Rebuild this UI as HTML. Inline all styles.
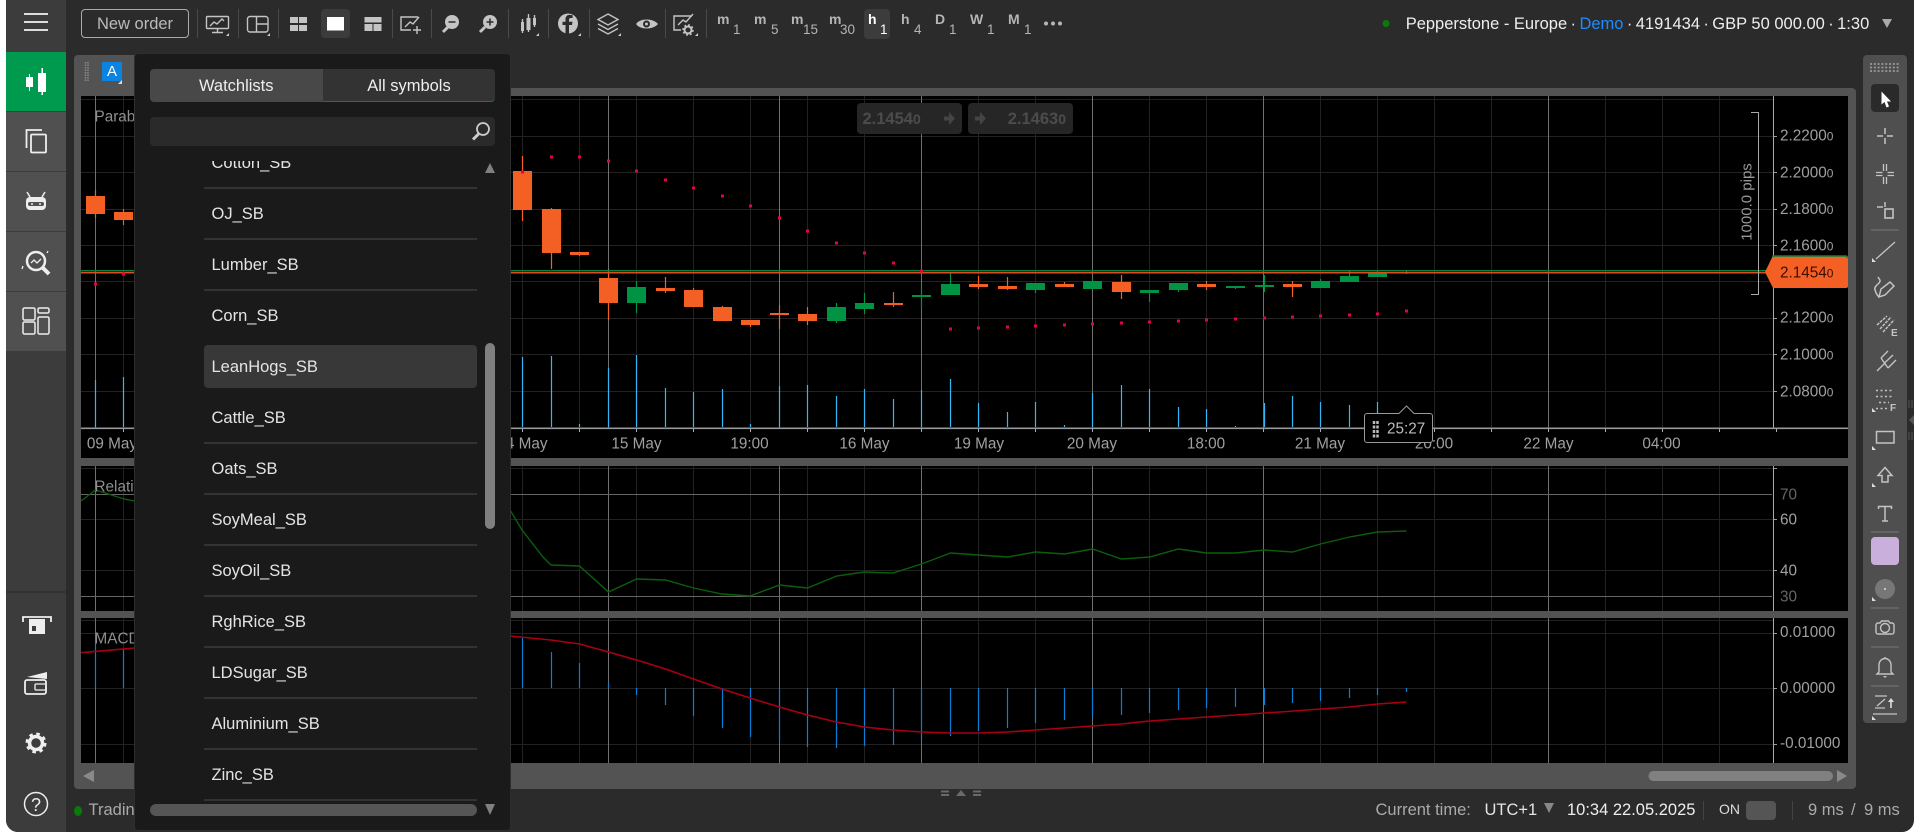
<!DOCTYPE html>
<html lang="en"><head><meta charset="utf-8"><title>Chart</title>
<style>
html,body{margin:0;padding:0;background:#fff;width:1920px;height:837px;overflow:hidden}
body{font-family:"Liberation Sans",sans-serif;position:relative}
div{position:absolute;box-sizing:border-box}
.t{white-space:nowrap;line-height:20px;height:20px;font-size:16.5px;color:#aaa}
svg{position:absolute;left:0;top:0;font-family:"Liberation Sans",sans-serif}
.item{position:relative;height:51px;border-bottom:2px solid #333;line-height:51px;padding-left:7.5px;font-size:16.5px;color:#e4e4e4;white-space:nowrap}
.nb{border-bottom:2px solid transparent}
.sb{position:absolute;left:0;right:0;top:3px;height:43px;background:#383838;border-radius:4px;padding-left:7.5px;line-height:45px}
.d{margin:0 -1.2px}
</style></head><body>
<div style="left:6px;top:0;width:1908px;height:832px;background:#2b2b2b;border-radius:0 0 12px 12px"></div>
<div style="left:6px;top:0;width:60px;height:832px;background:#3c3c3c;border-radius:0 0 0 12px"></div>
<div style="left:6px;top:52px;width:60px;height:59px;background:#009a4e"></div>
<div style="left:6px;top:112px;width:60px;height:59px;background:#505050"></div>
<div style="left:6px;top:172px;width:60px;height:59px;background:#505050"></div>
<div style="left:6px;top:232px;width:60px;height:59px;background:#505050"></div>
<div style="left:6px;top:292px;width:60px;height:59px;background:#505050"></div>
<div style="left:6px;top:591px;width:60px;height:2px;background:#333"></div>

<div style="left:74px;top:55px;width:80px;height:50px;background:#535353;border-radius:4px 4px 0 0"></div>
<div style="left:74px;top:88px;width:1782px;height:701px;background:#535353;border-radius:4px"></div>
<div style="left:81px;top:96px;width:1767px;height:362px;background:#000"></div>
<div style="left:81px;top:466px;width:1767px;height:145px;background:#000"></div>
<div style="left:81px;top:618px;width:1767px;height:145px;background:#000"></div>
<div style="left:102px;top:62px;width:20px;height:19px;background:#0a84e0;color:#fff;font-size:15px;line-height:19px;text-align:center">A</div>

<!-- CHART -->
<svg width="1920" height="837" viewBox="0 0 1920 837">
<defs><clipPath id="c"><rect x="81" y="96" width="1693" height="332"/><rect x="81" y="466" width="1693" height="145"/><rect x="81" y="618" width="1693" height="145"/></clipPath></defs>
<g clip-path="url(#c)" fill="none" shape-rendering="crispEdges">
<path stroke="#222" d="M123.5 0V837M522.5 0V837M579.5 0V837M636.5 0V837M693.5 0V837M750.5 0V837M807.5 0V837M864.5 0V837M978.5 0V837M1035.5 0V837M1149.5 0V837M1206.5 0V837M1320.5 0V837M1377.5 0V837M1434.5 0V837M1491.5 0V837M1605.5 0V837M1662.5 0V837M1719.5 0V837"/>
<path stroke="#222" d="M81 99.5H1774M81 136.5H1774M81 172.5H1774M81 209.5H1774M81 245.5H1774M81 281.5H1774M81 318.5H1774M81 354.5H1774M81 391.5H1774M81 468.5H1774M81 519.5H1774M81 570.5H1774M81 620.5H1774M81 633.5H1774M81 688.5H1774M81 744.5H1774"/>
<path stroke="#707070" d="M95.5 0V837M608.5 0V837M779.5 0V837M921.5 0V837M1092.5 0V837M1263.5 0V837M1548.5 0V837"/>
<path stroke="#666" d="M81 494.5H1772M81 596.5H1772"/>
</g>
<path d="M1773.5 96V428M1773.5 466V611M1773.5 618V763" stroke="#aaa" fill="none" shape-rendering="crispEdges"/>
<path d="M1774 136.5h3M1774 172.5h3M1774 209.5h3M1774 245.5h3M1774 318.5h3M1774 354.5h3M1774 391.5h3M1774 468.5h3M1774 519.5h3M1774 570.5h3M1774 633.5h3M1774 688.5h3M1774 744.5h3" stroke="#999" shape-rendering="crispEdges"/>
<rect x="81" y="427.5" width="1767" height="1.6" fill="#999"/>
<path d="M123.5 429v3M522.5 429v3M579.5 429v3M636.5 429v3M693.5 429v3M750.5 429v3M807.5 429v3M864.5 429v3M921.5 429v3M978.5 429v3M1035.5 429v3M1092.5 429v3M1149.5 429v3M1206.5 429v3M1263.5 429v3M1320.5 429v3M1377.5 429v3M1434.5 429v3M1491.5 429v3M1548.5 429v3M1605.5 429v3M1662.5 429v3M1719.5 429v3M1776.5 429v3" stroke="#aaa" shape-rendering="crispEdges"/>

<!-- volume -->
<path fill="none" stroke="#35b6f5" stroke-width="1.2" d="M95.5 380V427M123.5 377V427M522.5 357V427M551.5 356V427M579.5 424V427M608.5 368V427M636.5 355V427M665.5 388V427M693.5 392V427M722.5 389V427M750.5 424V427M779.5 386V427M807.5 385V427M836.5 396V427M864.5 389V427M893.5 399V427M921.5 390V427M950.5 379V427M978.5 403V427M1007.5 412V427M1035.5 402V427M1064.5 425V427M1092.5 393V427M1121.5 385V427M1149.5 389V427M1178.5 407V427M1206.5 409V427M1235.5 426V427M1264.5 403V427M1292.5 396V427M1320.5 402V427M1349.5 405V427M1377.5 402V427"/>

<!-- wicks -->
<path fill="none" stroke="#f46024" stroke-width="1.2" d="M95.5 190V218M123.5 209V225M522.5 156V221M551.5 208V269M579.5 252V256M608.5 269V320M665.5 277V293M693.5 288V307M722.5 306V321M750.5 320V327M779.5 305V329M807.5 307V325M893.5 292V307M978.5 276V289M1007.5 277V290M1064.5 282V287M1121.5 275V299M1206.5 281V290M1292.5 281V297"/>
<path fill="none" stroke="#009344" stroke-width="1.2" d="M636.5 281V313M836.5 303V323M864.5 293V314M921.5 286V309M950.5 273V295M1035.5 283V293M1092.5 279V289M1149.5 290V302M1178.5 283V292M1235.5 286V289M1264.5 275V292M1320.5 279V288M1349.5 271V282M1377.5 271V277"/>
<path stroke="#777" d="M1406.5 271V274"/>
<!-- bodies -->
<path fill="#f46024" d="M86 196h19v18h-19zM114 212h19v8h-19zM513 171h19v39h-19zM542 209h19v44h-19zM570 252h19v3h-19zM599 278h19v25h-19zM656 288h19v3h-19zM684 290h19v17h-19zM713 307h19v14h-19zM741 320h19v5h-19zM770 313h19v2h-19zM798 314h19v7h-19zM884 303h19v2h-19zM969 284h19v3h-19zM998 286h19v3h-19zM1055 284h19v3h-19zM1112 282h19v10h-19zM1197 284h19v3h-19zM1283 284h19v3h-19z"/>
<path fill="#009344" d="M627 287h19v16h-19zM827 307h19v14h-19zM855 303h19v6h-19zM912 295h19v2h-19zM941 284h19v11h-19zM1026 283h19v7h-19zM1083 281h19v8h-19zM1140 290h19v3h-19zM1169 283h19v7h-19zM1226 286h19v2h-19zM1255 285h19v2h-19zM1311 281h19v7h-19zM1340 276h19v6h-19zM1368 273h19v4h-19z"/>
<!-- price lines -->
<rect x="81" y="270" width="1692" height="1.5" fill="#0a8040"/>
<rect x="81" y="272" width="1692" height="1.5" fill="#d9501e"/>
<!-- psar -->
<path fill="none" stroke="#e6004c" stroke-width="3" stroke-linecap="butt" d="M94 284h3M122 274h3M521 172h3M550 157h3M578 157h3M607 161h3M635 171h3M664 180h3M692 188h3M721 196h3M749 206h3M778 218h3M806 231h3M835 243h3M863 253h3M892 263h3M920 271h3M949 329h3M977 328h3M1006 327h3M1034 326h3M1063 325h3M1091 324h3M1120 323h3M1148 322h3M1177 321h3M1205 320h3M1234 319h3M1263 318h3M1291 317h3M1319 316h3M1348 315h3M1376 314h3M1405 311h3"/>
<!-- RSI -->
<polyline fill="none" stroke="#0b5f0b" stroke-width="1.4" points="81,501 95.5,490 124,499 140,502 510,510 522,530 543,557 551,565 579.5,566 608.5,592 636.5,579 665.5,580 693.5,588 722,594 750,596 779.5,585 807.5,588 836.5,576 864.5,572 893,573 921.5,564 950.5,553 978.5,555 1007.5,557 1035.5,552 1064.5,554 1092.5,549 1121.5,559 1149.5,557 1178.5,549 1206.5,553 1235.5,553 1264.5,550 1292.5,552 1320.5,544 1349.5,537 1377.5,532 1406.5,531"/>
<!-- MACD hist -->
<path fill="none" stroke="#0a7fd8" stroke-width="1.2" d="M95.5 644V688M123.5 649V688M522.5 637V688M551.5 652V688M579.5 663V688M608.5 683V688M636.5 688V695M665.5 688V705M693.5 688V716M722.5 688V728M750.5 688V737M779.5 688V742M807.5 688V747M836.5 688V748M864.5 688V746M893.5 688V745M921.5 688V741M950.5 688V736M978.5 688V731M1007.5 688V728M1035.5 688V723M1064.5 688V720M1092.5 688V717M1121.5 688V715M1149.5 688V713M1178.5 688V710M1206.5 688V708M1235.5 688V707M1264.5 688V705M1292.5 688V703M1320.5 688V701M1349.5 688V698M1377.5 688V695M1406.5 688V692"/>
<polyline fill="none" stroke="#a80012" stroke-width="1.6" points="81,652.7 135,648 510,636 551,640 579.5,644 608.5,652 640,661 665.5,669 693.5,679 722,689 750,698 779.5,707 807.5,715 836.5,722 864.5,727 893,730 921.5,732 950.5,733 978.5,733 1007.5,732 1035.5,730 1064.5,728 1092.5,726 1121.5,724 1149.5,721 1178.5,719 1206.5,717 1235.5,715 1264.5,713 1280,712 1320.5,709 1349.5,707 1377.5,704 1406.5,702"/>
<!-- ruler -->
<path d="M1751 112.5h7.5V294.5h-7.5" fill="none" stroke="#aaa" shape-rendering="crispEdges"/>
<text transform="translate(1751.5 202) rotate(-90)" text-anchor="middle" font-size="15" fill="#999">1000.0 pips</text>
<!-- ghost boxes -->
<rect x="857" y="103" width="105" height="31" rx="4" fill="#262626"/>
<rect x="968" y="103" width="105" height="31" rx="4" fill="#262626"/>
<text x="862.5" y="124" font-size="16.5" font-weight="bold" fill="#4c4c4c">2.1454<tspan font-size="14">0</tspan></text>
<text x="1066" y="124" text-anchor="end" font-size="16.5" font-weight="bold" fill="#4c4c4c">2.1463<tspan font-size="14">0</tspan></text>
<path d="M944 116.5h5v-4.5l6 6.5-6 6.5v-4.5h-5z" fill="#444"/>
<path d="M975 116.5h5v-4.5l6 6.5-6 6.5v-4.5h-5z" fill="#444"/>
<!-- labels -->
<g font-size="15.3" fill="#8e8e8e">
<text x="94.5" y="121.5">Parab</text>
<text x="94.5" y="491.5">Relativ</text>
<text x="94.5" y="643.5">MACD</text>
</g>
<g font-size="15.3" fill="#a0a0a0" text-anchor="middle">
<text x="112" y="448.5">09 May</text>
<text x="522.5" y="448.5">14 May</text>
<text x="636.5" y="448.5">15 May</text>
<text x="749.5" y="448.5">19:00</text>
<text x="864.5" y="448.5">16 May</text>
<text x="979" y="448.5">19 May</text>
<text x="1092" y="448.5">20 May</text>
<text x="1206" y="448.5">18:00</text>
<text x="1320" y="448.5">21 May</text>
<text x="1434" y="448.5">20:00</text>
<text x="1548.5" y="448.5">22 May</text>
<text x="1661.5" y="448.5">04:00</text>
</g>
<g font-size="15.3" fill="#a0a0a0">
<text x="1780" y="140.5">2.2200<tspan font-size="12">0</tspan></text>
<text x="1780" y="177.5">2.2000<tspan font-size="12">0</tspan></text>
<text x="1780" y="214">2.1800<tspan font-size="12">0</tspan></text>
<text x="1780" y="250.5">2.1600<tspan font-size="12">0</tspan></text>
<text x="1780" y="322.5">2.1200<tspan font-size="12">0</tspan></text>
<text x="1780" y="359.5">2.1000<tspan font-size="12">0</tspan></text>
<text x="1780" y="396.5">2.0800<tspan font-size="12">0</tspan></text>
<text x="1780" y="499.5" fill="#666">70</text>
<text x="1780" y="524.5">60</text>
<text x="1780" y="575.5">40</text>
<text x="1780" y="601.5" fill="#666">30</text>
<text x="1780" y="637">0.01000</text>
<text x="1780" y="693">0.00000</text>
<text x="1780" y="748">-0.01000</text>
</g>
<!-- price tag -->
<path d="M1773 255.5h73a2 2 0 0 1 2 2V286a2 2 0 0 1-2 2h-73l-8-16z" fill="#f46024"/>
<path d="M1773 257V256h73l2 2" stroke="#0a8040" stroke-width="1.5" fill="none"/>
<text x="1780" y="277.5" font-size="15.3" fill="#3a0d00">2.1454<tspan font-size="12">0</tspan></text>
<!-- timer -->
<path d="M1367.5 413.5H1399l7.5-7.5 7.5 7.5h16a2.500 2.500 0 0 1 2.500 2.500V440a2.500 2.500 0 0 1-2.500 2.500h-63a2.500 2.500 0 0 1-2.500-2.500V416a2.500 2.500 0 0 1 2.500-2.500z" fill="#000" stroke="#999"/>
<path d="M1374 421v18M1377.5 421v18" stroke="#bbb" stroke-width="2.5" stroke-dasharray="3 1.5" fill="none"/>
<text x="1387" y="433.5" font-size="15.3" fill="#bdbdbd">25:27</text>
<!-- bottom scrollbar -->
<rect x="1648.5" y="771" width="184.5" height="10" rx="5" fill="#808080"/>
<path d="M1837 770l10 6-10 6z" fill="#8a8a8a"/>
<path d="M94 770l-11 6 11 6z" fill="#8a8a8a"/>
<!-- resizer -->
<path d="M941 790.5h8v2h-8zM941 794h8v2h-8zM973 790.5h8v2h-8zM973 794h8v2h-8z" fill="#6a6a6a"/>
<path d="M956 796l5-6 5 6z" fill="#6a6a6a"/>
<path d="M1909 400v8M1912 400v8M1909 432v8M1912 432v8" stroke="#555" fill="none"/>
<path d="M1914 415l-5 5 5 5z" fill="#555"/>
</svg>

<!-- status bar -->
<div style="left:74px;top:806px;width:8px;height:10px;background:#0a7a0a;border-radius:50%"></div>
<div class="t" style="left:88.5px;top:800px">Trading</div>
<div class="t" style="left:1375.5px;top:800px">Current time:</div>
<div class="t" style="left:1484.5px;top:800px;color:#e4e4e4">UTC+1</div>
<div class="t" style="left:1567px;top:800px;color:#eee">10:34 22.05.2025</div>
<div class="t" style="left:1719px;top:799px;font-size:14px;color:#ddd">ON</div>
<div style="left:1746px;top:801px;width:30px;height:19px;background:#555;border-radius:4px"></div>
<div class="t" style="left:1808px;top:800px">9 ms</div>
<div class="t" style="left:1851px;top:800px">/</div>
<div class="t" style="left:1864px;top:800px">9 ms</div>
<div style="left:1703px;top:801px;width:1px;height:19px;background:#444"></div>
<div style="left:1792px;top:801px;width:1px;height:19px;background:#444"></div>

<!-- top bar -->
<div style="left:81px;top:9px;width:108px;height:29px;border:1px solid #aaa;border-radius:4px;color:#bbb;font-size:16.5px;line-height:28px;text-align:center">New order</div>
<div style="left:321px;top:9px;width:29px;height:29px;background:#3c3c3c;border-radius:4px"></div>
<div style="left:864px;top:9px;width:26px;height:30px;background:#3c3c3c;border-radius:4px"></div>
<div class="t" style="left:1405.7px;top:14px;color:#eee">Pepperstone - Europe <span class="d">·</span> <span style="color:#1a8cff">Demo</span> <span class="d">·</span> 4191434 <span class="d">·</span> GBP 50 000.00 <span class="d">·</span> 1:30</div>

<div class="t" style="left:717px;top:9px;font-weight:bold;font-size:14px;color:#b5b5b5">m</div>
<div class="t" style="left:733px;top:20px;font-size:13.5px;color:#b5b5b5">1</div>
<div class="t" style="left:754px;top:9px;font-weight:bold;font-size:14px;color:#b5b5b5">m</div>
<div class="t" style="left:771px;top:20px;font-size:13.5px;color:#b5b5b5">5</div>
<div class="t" style="left:791px;top:9px;font-weight:bold;font-size:14px;color:#b5b5b5">m</div>
<div class="t" style="left:803px;top:20px;font-size:13.5px;color:#b5b5b5">15</div>
<div class="t" style="left:829px;top:9px;font-weight:bold;font-size:14px;color:#b5b5b5">m</div>
<div class="t" style="left:840px;top:20px;font-size:13.5px;color:#b5b5b5">30</div>
<div class="t" style="left:868px;top:9px;font-weight:bold;font-size:14px;color:#fff">h</div>
<div class="t" style="left:880px;top:20px;font-size:13.5px;color:#fff">1</div>
<div class="t" style="left:901px;top:9px;font-weight:bold;font-size:14px;color:#b5b5b5">h</div>
<div class="t" style="left:914px;top:20px;font-size:13.5px;color:#b5b5b5">4</div>
<div class="t" style="left:935px;top:9px;font-weight:bold;font-size:14px;color:#b5b5b5">D</div>
<div class="t" style="left:949px;top:20px;font-size:13.5px;color:#b5b5b5">1</div>
<div class="t" style="left:970px;top:9px;font-weight:bold;font-size:14px;color:#b5b5b5">W</div>
<div class="t" style="left:987px;top:20px;font-size:13.5px;color:#b5b5b5">1</div>
<div class="t" style="left:1008px;top:9px;font-weight:bold;font-size:14px;color:#b5b5b5">M</div>
<div class="t" style="left:1024px;top:20px;font-size:13.5px;color:#b5b5b5">1</div>

<!-- ICONS -->
<svg width="1920" height="837" viewBox="0 0 1920 837" fill="none">
<!-- hamburger -->
<path d="M24 14h24M24 22h24M24 30h24" stroke="#ddd" stroke-width="2"/>
<!-- sidebar -->
<path fill="#fff" d="M29 74h1v3h3v10h-3v4h-1v-4h-3V77h3zM41.5 68h1.500v5h3v19h-3v3h-1.500v-3h-3.500V73h3.500z"/>
<path stroke="#eee" stroke-width="1.8" d="M42 130H26.5v18"/>
<rect x="31" y="134.5" width="15" height="18" rx="1" stroke="#eee" stroke-width="1.8"/>
<rect x="26" y="197" width="20" height="13" rx="4" fill="#eee"/>
<path d="M27 192l3 5M45 192l-3 5" stroke="#eee" stroke-width="1.5"/>
<rect x="28" y="202" width="16" height="4" rx="2" fill="#505050"/><path d="M31 204h2M39 204h2" stroke="#eee" stroke-width="1.5"/>
<circle cx="36" cy="261" r="9" stroke="#eee" stroke-width="2.5"/>
<path d="M42 267l7 7" stroke="#eee" stroke-width="4"/>
<path d="M31 263l3-3 3 3 4-4M23 266l-1 3M47 253l1-2" stroke="#eee" stroke-width="1.3"/>
<g stroke="#eee" stroke-width="1.5"><rect x="23" y="308" width="12" height="12" rx="1.5"/><rect x="38" y="308" width="11" height="5" rx="1.5"/><rect x="23" y="322" width="12" height="12" rx="1.5"/><rect x="38" y="317" width="11" height="17" rx="1.5"/></g>
<path d="M23 622v-5h28v5" stroke="#eee" stroke-width="1.8"/>
<path fill="#eee" d="M29 619h16v15H29z"/><path fill="#3c3c3c" d="M32 626h4v5h-4z"/>
<rect x="25" y="680" width="21" height="14" rx="2" stroke="#eee" stroke-width="1.8"/>
<rect x="35" y="684" width="11" height="6" rx="1" stroke="#eee" stroke-width="1.3"/>
<path d="M27 677l20-5v7z" fill="#eee"/>
<circle cx="36" cy="743" r="6.5" stroke="#eee" stroke-width="3.5"/>
<circle cx="36" cy="743" r="9" stroke="#eee" stroke-width="3" stroke-dasharray="3.5 3.570"/>
<circle cx="36" cy="804" r="11.5" stroke="#eee" stroke-width="1.5"/>
<text x="36" y="811" text-anchor="middle" font-size="18" fill="#eee">?</text>

<!-- separators -->
<path d="M197.5 9v29M238.5 9v29M278.5 9v29M392.5 9v29M431.5 9v29M508.5 9v29M548.5 9v29M589.5 9v29M665.5 9v29M706.5 9v29" stroke="#4a4a4a" shape-rendering="crispEdges"/>
<g stroke="#c4c4c4" stroke-width="1.4">
<rect x="206.5" y="16.5" width="22" height="12" rx="1"/><path d="M210 26l4-4 3 2 5-5 2 2M217.5 29v3M212 32.5h11"/>
<rect x="247.5" y="16.5" width="20.5" height="15.5" rx="2.5"/><path d="M256.5 16.5v15.5M256.5 24h11.5"/>
<path d="M418 17h-17v13h10M405 27l5-5 3 2 6-7M417 26v8M413 30h8"/>
<path d="M448 27l-5 5M485 27l-5 5" stroke-width="3"/>
<path d="M522.5 19v14M528.5 14v18M534.5 15v12"/>
<path d="M608 14l10 5.500-10 5.500-10-5.500zM598 24l10 5.500 10-5.500M598 28.500l10 5.500 10-5.500"/>
<path d="M692 16h-18v14h7M678 25l5-5 3 2 7-8"/>
<circle cx="688" cy="30" r="3.5" stroke-width="2"/>
<circle cx="688" cy="30" r="5" stroke-width="1.5" stroke-dasharray="2 1.900"/>
</g>
<path fill="#c4c4c4" d="M290 17h8v6h-8zM299 17h8v6h-8zM290 25h8v6h-8zM299 25h8v6h-8zM364.500 17h17v5.500h-17zM364.500 24h8v7h-8zM373.500 24h8v7h-8zM521 22h3v9h-3zM526.500 18h4v12h-4zM533 18h3v7h-3z"/>
<rect x="327" y="17" width="17" height="13.5" fill="#fff"/>
<circle cx="452" cy="22" r="7" fill="#c4c4c4"/><path d="M448.5 22h7" stroke="#2b2b2b" stroke-width="1.5"/>
<circle cx="490" cy="22" r="7" fill="#c4c4c4"/><path d="M486.5 22h7M490 18.500v7" stroke="#2b2b2b" stroke-width="1.5"/>
<circle cx="568" cy="23.5" r="10" fill="#c4c4c4"/>
<path d="M569 33.500v-8.500h3l.5-3.300H569v-2c0-1 .5-1.700 1.800-1.700h1.800v-2.900c-1-.1-2-.2-2.800-.2-2.800 0-4.300 1.700-4.300 4.400v2.400h-3V25h3v8.500z" fill="#2b2b2b"/>
<path d="M636 24c4-6 17-6 22 0-5 6-18 6-22 0z" fill="#c4c4c4"/><circle cx="646.5" cy="24" r="3.5" fill="#2b2b2b"/><circle cx="646.5" cy="24" r="1.5" fill="#c4c4c4"/>
<path d="M229 33v3h-3zM270 33v3h-3zM539 33v3h-3zM581 33v3h-3zM621 33v3h-3zM698 33v3h-3z" fill="#ccc"/>
<circle cx="1046" cy="23.5" r="2" fill="#b5b5b5"/><circle cx="1053" cy="23.5" r="2" fill="#b5b5b5"/><circle cx="1060" cy="23.5" r="2" fill="#b5b5b5"/>
<circle cx="1386" cy="23.5" r="3.5" fill="#0a7a0a"/>
<path d="M1882 19h10l-5 9z" fill="#aaa"/>
<path d="M122 80v4h-4z" fill="#ddd"/>
<path d="M85.5 62v20M88 62v20" stroke="#8a8a8a" stroke-width="1.5" stroke-dasharray="1.5 1"/>
<path d="M1544 803h10l-5 10z" fill="#888"/>

<!-- right toolbar -->
<rect x="1863" y="55" width="44" height="668" rx="4" fill="#4f4f4f"/>
<path d="M1870 64h30M1870 67.500h30M1870 71h30" stroke="#999" stroke-width="1.8" stroke-dasharray="2 1.800"/>
<rect x="1871" y="84" width="28" height="28" rx="4" fill="#2a2a2a"/>
<path d="M1881.5 91.500v13l3-2.500 2 5.500 2.500-1-2-5h4z" fill="#fff"/>
<path d="M1877 136h6M1887 136h6M1885 128v6M1885 138v6" stroke="#c4c4c4" stroke-width="1.5"/>
<path d="M1876 172.500h6.500M1887.500 172.500h6.500M1876 175.500h6.500M1887.500 175.500h6.500M1883.500 164v7M1886.500 164v7M1883.500 177v7M1886.500 177v7" stroke="#c4c4c4" stroke-width="1.3"/>
<path d="M1877 207h6M1885 202v5" stroke="#c4c4c4" stroke-width="1.5"/><rect x="1885" y="209" width="8" height="9" stroke="#c4c4c4" stroke-width="1.6"/>
<path d="M1871 230h28M1871 532h28M1871 608h28M1871 647h28M1871 686h28" stroke="#6a6a6a" stroke-width="1.5"/>
<path d="M1876 259l19-17" stroke="#c4c4c4" stroke-width="1.3"/>
<path d="M1872 258v4h4z" fill="#ddd"/>
<path d="M1878 277c2 3 3 4 1 6s-5 4-4 7 2 5 3.500 6.500M1879 297l2-8 9-7 4 4-9 9z" stroke="#c4c4c4" stroke-width="1.5"/>
<path d="M1877 325l10-9M1880 329l11-12M1883 332l11-12" stroke="#c4c4c4" stroke-width="1.5" stroke-dasharray="3 1"/>
<text x="1891" y="336" font-size="10" font-weight="bold" fill="#c4c4c4">E</text>
<path d="M1877 371l8-8M1881 358l7 10M1881 358l7-7M1884.500 363l8.500-8M1888 368l8-8" stroke="#c4c4c4" stroke-width="1.4"/>
<path d="M1876 390.500h18M1876 396.500h18M1879 402.500h10M1876 408.500h12" stroke="#c4c4c4" stroke-width="1.5" stroke-dasharray="2 2.500"/>
<text x="1890" y="411" font-size="10" font-weight="bold" fill="#c4c4c4">F</text>
<path d="M1872 408v4h4z" fill="#ddd"/>
<rect x="1876.5" y="431.5" width="17.5" height="11.5" stroke="#c4c4c4" stroke-width="1.5"/>
<path d="M1872 446v4h4z" fill="#ddd"/>
<path d="M1885 467.500l7 8h-4v6.500h-6v-6.500h-4z" stroke="#c4c4c4" stroke-width="1.5"/>
<path d="M1872 483v4h4z" fill="#ddd"/>
<path d="M1878.500 509v-2.500h13v2.500M1885 506.500v14.500M1882 521h6" stroke="#c4c4c4" stroke-width="1.5"/>
<rect x="1871" y="537" width="28" height="28" rx="4" fill="#c8afdc"/>
<circle cx="1885" cy="589" r="10" fill="#777"/><circle cx="1885" cy="589" r="1" fill="#ddd"/>
<path d="M1872 597v4h4z" fill="#ddd"/>
<path d="M1878 623h2l1.500-2h7l1.500 2h2a2 2 0 0 1 2 2v7a2 2 0 0 1-2 2h-14a2 2 0 0 1-2-2v-7a2 2 0 0 1 2-2z" stroke="#c4c4c4" stroke-width="1.4"/>
<circle cx="1885" cy="628" r="4.5" stroke="#c4c4c4" stroke-width="1.4"/>
<path d="M1885 657v2M1879 672v-7a6 6.500 0 0 1 12 0v7l2 2h-16z" stroke="#c4c4c4" stroke-width="1.4"/>
<path d="M1883 676h4l-2 2z" fill="#c4c4c4"/>
<path d="M1875 696h12M1877 706l8-7M1875 708h10M1873 714h24" stroke="#c4c4c4" stroke-width="1.3"/>
<path d="M1891 708v-8" stroke="#ddd" stroke-width="1.6"/><path d="M1888 702l3-4 3 4z" fill="#ddd"/>
<path d="M1872 716v4h4z" fill="#ddd"/>
</svg>

<!-- DROPDOWN -->
<div style="left:134px;top:53px;width:376.5px;height:778px;background:#1a1a1a;border:1px solid #2e2e2e;border-radius:4px;z-index:5"></div>
<div style="z-index:6;left:150px;top:69px;width:172.5px;height:33px;background:#484848;border-radius:4px 0 0 4px;color:#eee;font-size:16.5px;line-height:35px;text-align:center">Watchlists</div>
<div style="z-index:6;left:323px;top:69px;width:172px;height:33px;background:#333;border-bottom:1px solid #0a8040;border-radius:0 4px 4px 0;color:#eee;font-size:16.5px;line-height:35px;text-align:center">All symbols</div>
<div style="z-index:6;left:150px;top:117px;width:345px;height:29px;background:#2a2a2a;border-radius:4px"></div>
<div style="z-index:6;left:204px;top:161px;width:273px;height:641px;overflow:hidden">
<div style="position:relative;top:-23px;left:0;width:273px">
<div class="item">Cotton_SB</div>
<div class="item">OJ_SB</div>
<div class="item">Lumber_SB</div>
<div class="item nb">Corn_SB</div>
<div class="item nb"><span class="sb">LeanHogs_SB</span></div>
<div class="item">Cattle_SB</div>
<div class="item">Oats_SB</div>
<div class="item">SoyMeal_SB</div>
<div class="item">SoyOil_SB</div>
<div class="item">RghRice_SB</div>
<div class="item">LDSugar_SB</div>
<div class="item">Aluminium_SB</div>
<div class="item">Zinc_SB</div>
<div class="item">&nbsp;</div>
</div></div>
<div style="z-index:6;left:485px;top:343px;width:10px;height:186px;background:#808080;border-radius:5px"></div>
<div style="z-index:6;left:150px;top:804px;width:327px;height:12px;background:#555;border-radius:6px"></div>
<svg width="1920" height="837" viewBox="0 0 1920 837" style="z-index:7" fill="none">
<path d="M485 173l5-10 5 10z" fill="#808080"/>
<path d="M485 804h10l-5 11z" fill="#808080"/>
<circle cx="483" cy="129" r="6" stroke="#ccc" stroke-width="1.8"/>
<path d="M478.5 134l-5.500 5.500" stroke="#ccc" stroke-width="3"/>
</svg>
</body></html>
